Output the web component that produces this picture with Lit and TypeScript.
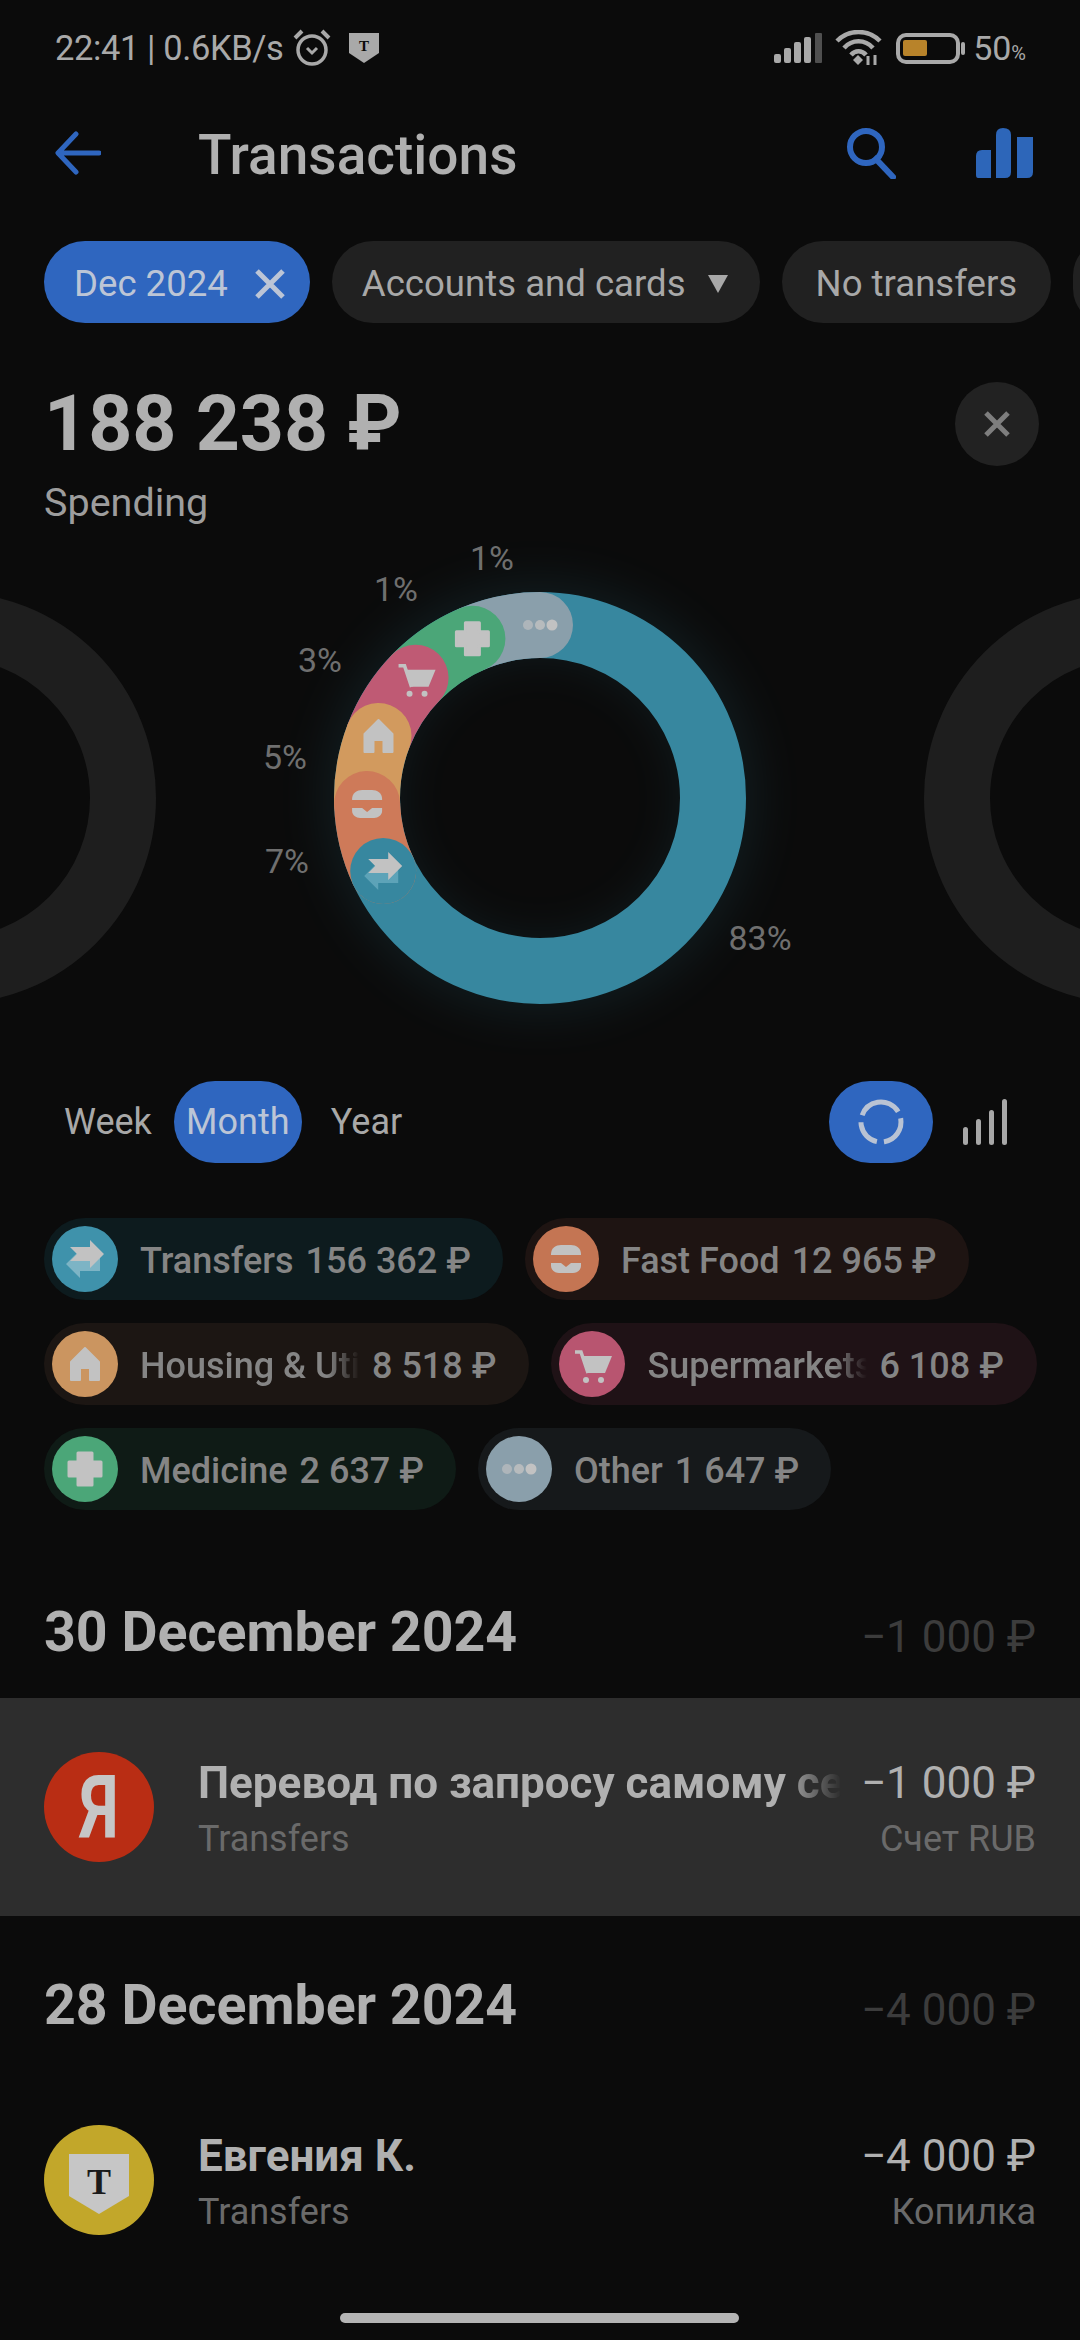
import { LitElement, html, css, svg } from "lit";
import { customElement } from "lit/decorators.js";

const ICON = "#c2c2c2";
type Kind = "transfer" | "food" | "house" | "cart" | "plus" | "dots";

function glyph(kind: Kind, tint = "#7db4c5") {
  switch (kind) {
    case "transfer":
      return svg`<path fill=${tint} d="M-19 5 L-5 -9 V-3 H15 V12 H-5 V19 Z"/><path fill=${ICON} d="M19 -5 L5 -19 V-12 H-15 L-8 -5 L-15 2 H5 V9 Z"/>`;
    case "food":
      return svg`<path fill=${ICON} d="M-15 -4 V-5 C-15 -11 -10 -14 -5 -14 H5 C10 -14 15 -11 15 -5 V-4 Z"/><path fill=${ICON} d="M-15 4 H-5 L0 8 L5 4 H15 V7 C15 11 11 14 7 14 H-7 C-11 14 -15 11 -15 7 Z"/>`;
    case "house":
      return svg`<path fill=${ICON} stroke=${ICON} stroke-width="2" stroke-linejoin="round" d="M0 -16 L14 -2 V16 H5 V4 H-5 V16 H-14 V-2 Z"/>`;
    case "cart":
      return svg`<path fill="none" stroke=${ICON} stroke-width="3.5" d="M-17 -12 H-11 L-4 9"/><path fill=${ICON} d="M-9 -8 H20 L13 9 H-4 Z"/><circle fill=${ICON} cx="-6" cy="16" r="3"/><circle fill=${ICON} cx="9" cy="16" r="3"/>`;
    case "plus":
      return svg`<path fill=${ICON} stroke=${ICON} stroke-width="3" stroke-linejoin="round" d="M-7 -16 H7 V-7 H16 V7 H7 V16 H-7 V7 H-16 V-7 H-7 Z"/>`;
    case "dots":
      return svg`<circle fill=${ICON} opacity=".65" cx="-12" cy="0" r="5"/><circle fill=${ICON} opacity=".8" cx="0" cy="0" r="5"/><circle fill=${ICON} cx="12" cy="0" r="5.5"/>`;
  }
}

const C = { cx: 540, cy: 798, r: 173 };
const pt = (deg: number, r = C.r) => {
  const a = (deg * Math.PI) / 180;
  return { x: C.cx + r * Math.sin(a), y: C.cy - r * Math.cos(a) };
};
const arc = (from: number, to: number) => {
  const a = pt(from), b = pt(to);
  return `M${a.x} ${a.y} A${C.r} ${C.r} 0 0 1 ${b.x} ${b.y}`;
};

const TEAL = "#37879f";
const segments: { kind: Kind; color: string; from: number; to: number }[] = [
  { kind: "dots", color: "#8a9fab", from: -23, to: 0 },
  { kind: "plus", color: "#4ba678", from: -46, to: -23 },
  { kind: "cart", color: "#bf5a74", from: -69, to: -46 },
  { kind: "house", color: "#d29a5e", from: -92, to: -69 },
  { kind: "food", color: "#ce7a59", from: -115, to: -92 },
];
const pctLabels = [
  { t: "1%", x: 492, y: 558 },
  { t: "1%", x: 396, y: 589 },
  { t: "3%", x: 320, y: 660 },
  { t: "5%", x: 285, y: 757 },
  { t: "7%", x: 287, y: 861 },
  { t: "83%", x: 760, y: 938 },
];

const legend: { kind: Kind; color: string; bg: string; name: string; amt: string; clip?: boolean }[] = [
  { kind: "transfer", color: "#3f92ab", bg: "#0d1b1e", name: "Transfers", amt: "156 362 ₽" },
  { kind: "food", color: "#c47553", bg: "#1e1412", name: "Fast Food", amt: "12 965 ₽" },
  { kind: "house", color: "#cb9560", bg: "#1c1613", name: "Housing & Utilities", amt: "8 518 ₽", clip: true },
  { kind: "cart", color: "#b85570", bg: "#1f1216", name: "Supermarkets", amt: "6 108 ₽", clip: true },
  { kind: "plus", color: "#4ba678", bg: "#0f1b16", name: "Medicine", amt: "2 637 ₽" },
  { kind: "dots", color: "#8a9fab", bg: "#16191b", name: "Other", amt: "1 647 ₽" },
];

@customElement("app-root")
export class AppRoot extends LitElement {
  static styles = css`
    :host {
      display: block;
      position: relative;
      width: 1080px;
      height: 2340px;
      overflow: hidden;
      background: #0b0b0b;
      color: #b0b0b0;
      font-family: Roboto, "Noto Sans", sans-serif;
    }
    svg { display: block; flex: none; }

    .status { height: 96px; display: flex; align-items: center; padding: 0 54px 0 55px; font-size: 34.5px; color: #a9a9a9; }
    .status .time { letter-spacing: -0.4px; margin-right: 8px; }
    .status .shield { margin-left: 17px; }
    .status .spacer { flex: 1; }
    .status .wifi { margin: 0 14px 0 13px; }
    .status .batt { margin-right: 8px; }
    .status .pct { font-size: 34px; }
    .status .pct small { font-size: 20px; }

    .header { height: 114px; display: flex; align-items: center; padding: 0 47px 0 55px; }
    .header h1 { margin: 3px 0 0 97px; font-size: 55px; font-weight: 500; flex: 1; }
    .header .search { margin-right: 79px; }

    .filters { margin-top: 31px; height: 82px; display: flex; gap: 22px; padding-left: 44px; overflow: hidden; font-size: 36.6px; color: #a8a8a8; }
    .filter { flex: none; height: 82px; box-sizing: border-box; padding: 3px 34px 0 34px; border-radius: 41px; background: #212121; display: flex; align-items: center; white-space: nowrap; }
    .filter.on { background: #2f66bf; color: #bcc5d6; padding: 3px 25px 0 30px; gap: 27px; }
    .filter.arrow { gap: 22px; padding: 3px 32px 0 30px; }
    .filter.stub { width: 60px; }

    .summary { display: flex; justify-content: space-between; padding: 59px 41px 0 44px; height: 148px; }
    .summary .sum { font-size: 77px; font-weight: 700; line-height: 84px; }
    .summary .lbl { font-size: 39.5px; line-height: 44px; margin-top: 15px; color: #9d9d9d; }
    .close { width: 84px; height: 84px; border-radius: 50%; background: #222; display: flex; align-items: center; justify-content: center; }

    .chart { display: block; width: 1080px; height: 551px; }
    .chart text { font-size: 34px; fill: #6f6f6f; font-family: Roboto, sans-serif; text-anchor: middle; dominant-baseline: central; }

    .period { height: 82px; display: flex; align-items: center; padding: 0 73px 0 64px; font-size: 36px; color: #a8a8a8; }
    .period .w { margin-right: 22px; }
    .period .m { height: 82px; width: 128px; border-radius: 41px; background: #2f66bf; color: #bcc5d6; display: flex; align-items: center; justify-content: center; margin-right: 29px; }
    .period .gap { flex: 1; }
    .period .tog { width: 104px; height: 82px; border-radius: 41px; background: #2f66bf; display: flex; align-items: center; justify-content: center; margin-right: 30px; }

    .legend { margin-top: 55px; padding: 0 30px 0 44px; display: flex; flex-wrap: wrap; gap: 23px 22px; }
    .chip { height: 82px; box-sizing: border-box; border-radius: 41px; display: flex; align-items: center; padding: 0 32px 0 8px; font-size: 36px; font-weight: 500; color: #858585; white-space: nowrap; }
    .chip.long { padding-right: 33px; }
    .chip .dot { width: 66px; height: 66px; border-radius: 50%; display: flex; align-items: center; justify-content: center; margin-right: 22px; flex: none; }
    .chip .tx { padding-top: 4px; }
    .chip .nm { margin-right: 12px; }
    .chip .nm.clip { width: 220px; overflow: hidden; -webkit-mask-image: linear-gradient(90deg, #000 85%, transparent); mask-image: linear-gradient(90deg, #000 85%, transparent); }

    .day { height: 155px; padding: 0 44px; box-sizing: border-box; display: flex; justify-content: space-between; align-items: flex-start; }
    .day.first { margin-top: 33px; }
    .day h2 { margin: 58px 0 0; font-size: 55.5px; line-height: 64px; font-weight: 700; }
    .day span { margin-top: 68px; font-size: 44px; line-height: 52px; color: #3c3c3c; }

    .row { height: 218px; display: flex; align-items: center; padding: 0 44px; }
    .row.hi { background: #2d2d2d; }
    .logo { width: 110px; height: 110px; border-radius: 50%; flex: none; display: flex; align-items: center; justify-content: center; margin-right: 44px; }
    .logo.ya { background: #b92d14; color: #c6c6c6; font-size: 88px; font-weight: 700; font-family: Roboto, sans-serif; }
    .logo.ya span { display: block; transform: scaleX(0.74); }
    .logo.tk { background: #c2a72a; padding-top: 7px; box-sizing: border-box; }
    .mid { flex: 1; min-width: 0; margin-right: 20px; padding-top: 4px; }
    .side { flex: none; text-align: right; padding-top: 4px; }
    .ttl { font-size: 44px; line-height: 52px; font-weight: 700; white-space: nowrap; overflow: hidden; }
    .ttl.fade { -webkit-mask-image: linear-gradient(90deg, #000 91%, transparent); mask-image: linear-gradient(90deg, #000 91%, transparent); }
    .sub { font-size: 36px; line-height: 44px; margin-top: 8px; color: #6a6a6a; white-space: nowrap; }
    .amt { font-size: 44px; line-height: 52px; color: #b0b0b0; }

    .home { position: absolute; left: 340px; top: 2313px; width: 399px; height: 10px; border-radius: 5px; background: #b4b4b4; }
    .shieldT { font: 700 15px "Liberation Serif", serif; fill: #0b0b0b; text-anchor: middle; }
    .tkT { font: 700 36px "Liberation Serif", serif; fill: #1a1a1a; text-anchor: middle; }
  `;

  render() {
    return html`
      <div class="status">
        <span class="time">22:41 | 0.6KB/s</span>
        <svg width="40" height="38" viewBox="0 0 40 38" fill="none" stroke="#a9a9a9" stroke-width="3.5"><circle cx="20" cy="21" r="14"/><path d="M3 9 L10 2 M37 9 L30 2" stroke-width="4"/><path d="M15 19 L20 24 L25 19" stroke-width="3"/></svg>
        <svg class="shield" width="30" height="30" viewBox="0 0 30 30"><path fill="#a9a9a9" d="M0 0 H30 V20 L15 30 L0 20 Z"/><text class="shieldT" x="15" y="18">Т</text></svg>
        <span class="spacer"></span>
        <svg width="48" height="30" viewBox="0 0 48 30"><g fill="#a9a9a9"><rect x="0" y="21" width="7" height="9" rx="2"/><rect x="10" y="15" width="7" height="15" rx="2"/><rect x="20" y="9" width="7" height="21" rx="2"/><rect x="30" y="4" width="7" height="26" rx="2"/></g><rect x="41" y="0" width="7" height="30" rx="1" fill="#4f4f4f"/></svg>
        <svg class="wifi" width="47" height="36" viewBox="0 0 47 36" fill="none" stroke="#a9a9a9" stroke-width="4.5"><path d="M2 11 C14 -1 33 -1 45 11"/><path d="M9 18 C17 9 30 9 38 18"/><path d="M16 25 C20 20 27 20 31 25"/><path d="M18 30 L23 25 L28 30 L23 35 Z" fill="#a9a9a9" stroke="none"/><path d="M33 35 V26 M40 35 V25" stroke-width="3"/></svg>
        <svg class="batt" width="69" height="31" viewBox="0 0 69 31"><rect x="2" y="2" width="60" height="27" rx="8" fill="none" stroke="#a9a9a9" stroke-width="4"/><rect x="7" y="7" width="24" height="16" rx="2" fill="#b8832a"/><rect x="65" y="9" width="4" height="13" rx="2" fill="#a9a9a9"/></svg>
        <span class="pct">50<small>%</small></span>
      </div>

      <div class="header">
        <svg width="46" height="44" viewBox="0 0 46 44" fill="none" stroke="#2f66bf" stroke-width="5" stroke-linecap="round" stroke-linejoin="round"><path d="M44 22 H4 M21 3 L3 22 L21 41"/></svg>
        <h1>Transactions</h1>
        <svg class="search" width="50" height="52" viewBox="0 0 50 52" fill="none" stroke="#2f66bf" stroke-width="6"><circle cx="20" cy="20" r="16"/><path d="M30 32 L47 50" stroke-linecap="square"/></svg>
        <svg width="58" height="50" viewBox="0 0 58 50" fill="#2d66b9"><path d="M1 28 Q1 22 7 22 H16 V50 H3 Q1 50 1 47 Z"/><path d="M21 7 Q21 0 28 0 Q36 0 36 7 V44 Q36 50 30 50 H21 Z"/><path d="M42 9 H58 V44 Q58 50 52 50 H42 Z"/></svg>
      </div>

      <div class="filters">
        <div class="filter on">Dec 2024
          <svg width="30" height="30" viewBox="0 0 30 30" stroke="#bcc5d6" stroke-width="5"><path d="M2 2 L28 28 M28 2 L2 28"/></svg>
        </div>
        <div class="filter arrow">Accounts and cards
          <svg width="20" height="18" viewBox="0 0 20 18"><path fill="#a8a8a8" d="M0 0 H20 L10 18 Z"/></svg>
        </div>
        <div class="filter">No transfers</div>
        <div class="filter stub"></div>
      </div>

      <div class="summary">
        <div>
          <div class="sum">188 238 ₽</div>
          <div class="lbl">Spending</div>
        </div>
        <div class="close"><svg width="28" height="28" viewBox="0 0 28 28" stroke="#7e7e7e" stroke-width="5"><path d="M3 3 L25 25 M25 3 L3 25"/></svg></div>
      </div>

      <svg class="chart" viewBox="0 530 1080 551">
        <defs><filter id="glow" x="-30%" y="-30%" width="160%" height="160%"><feGaussianBlur stdDeviation="24"/></filter></defs>
        <circle cx="-50" cy="798" r="173" fill="none" stroke="#1e1e1e" stroke-width="66"/>
        <circle cx="1130" cy="798" r="173" fill="none" stroke="#1e1e1e" stroke-width="66"/>
        <circle cx="540" cy="798" r="180" fill="none" stroke=${TEAL} stroke-width="70" opacity=".14" filter="url(#glow)"/>
        <circle cx="540" cy="798" r="173" fill="none" stroke=${TEAL} stroke-width="66"/>
        ${segments.map(
          (s) => svg`<path d=${arc(s.from, s.to)} fill="none" stroke=${s.color} stroke-width="66" stroke-linecap="round"/>`
        )}
        ${(() => {
          const p = pt(-115);
          return svg`<circle cx=${p.x} cy=${p.y} r="33" fill=${TEAL}/>`;
        })()}
        ${[...segments.map((s) => ({ k: s.kind, d: s.to })), { k: "transfer" as Kind, d: -115 }].map((s) => {
          const p = pt(s.d);
          return svg`<g transform="translate(${p.x} ${p.y})">${glyph(s.k, "#5da3b8")}</g>`;
        })}
        ${pctLabels.map((l) => svg`<text x=${l.x} y=${l.y}>${l.t}</text>`)}
      </svg>

      <div class="period">
        <span class="w">Week</span>
        <span class="m">Month</span>
        <span>Year</span>
        <span class="gap"></span>
        <div class="tog">
          <svg width="50" height="50" viewBox="0 0 50 50" fill="none" stroke="#b9c3d4" stroke-width="5"><circle cx="25" cy="25" r="20" stroke-dasharray="24 7 32 7 27 7 21 1" transform="rotate(-100 25 25)"/></svg>
        </div>
        <svg width="44" height="46" viewBox="0 0 44 46" fill="#a8a8a8"><rect x="0" y="28" width="5" height="18" rx="2.5"/><rect x="13" y="20" width="5" height="26" rx="2.5"/><rect x="26" y="11" width="5" height="35" rx="2.5"/><rect x="39" y="0" width="5" height="46" rx="2.5"/></svg>
      </div>

      <div class="legend">
        ${legend.map(
          (c) => html`<div class="chip ${c.clip ? "long" : ""}" style="background:${c.bg}">
            <div class="dot" style="background:${c.color}"><svg width="50" height="50" viewBox="-25 -25 50 50">${glyph(c.kind)}</svg></div>
            <span class="tx nm ${c.clip ? "clip" : ""}">${c.name}</span>
            <span class="tx">${c.amt}</span>
          </div>`
        )}
      </div>

      <div class="day first"><h2>30 December 2024</h2><span>−1 000 ₽</span></div>
      <div class="row hi">
        <div class="logo ya"><span>Я</span></div>
        <div class="mid"><div class="ttl fade">Перевод по запросу самому себе</div><div class="sub">Transfers</div></div>
        <div class="side"><div class="amt">−1 000 ₽</div><div class="sub">Счет RUB</div></div>
      </div>
      <div class="day"><h2>28 December 2024</h2><span>−4 000 ₽</span></div>
      <div class="row">
        <div class="logo tk"><svg width="60" height="60" viewBox="0 0 60 60"><path fill="#c6c6c6" d="M0 0 H60 V42 L30 60 L0 42 Z"/><text class="tkT" x="30" y="40">Т</text></svg></div>
        <div class="mid"><div class="ttl">Евгения К.</div><div class="sub">Transfers</div></div>
        <div class="side"><div class="amt">−4 000 ₽</div><div class="sub">Копилка</div></div>
      </div>
      <div class="home"></div>
    `;
  }
}
